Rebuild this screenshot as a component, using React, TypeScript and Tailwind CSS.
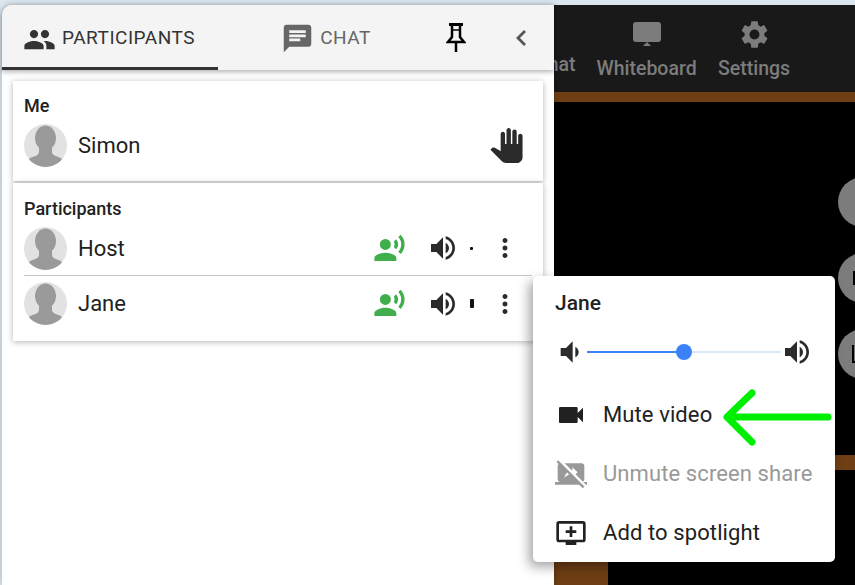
const ICONS = {
  people:
    "M16 11c1.66 0 2.99-1.34 2.99-3S17.66 5 16 5c-1.66 0-3 1.34-3 3s1.34 3 3 3zm-8 0c1.66 0 2.99-1.34 2.99-3S9.66 5 8 5C6.34 5 5 6.34 5 8s1.34 3 3 3zm0 2c-2.33 0-7 1.17-7 3.5V19h14v-2.5c0-2.33-4.67-3.5-7-3.5zm8 0c-.29 0-.62.02-.97.05 1.16.84 1.97 1.97 1.97 3.45V19h6v-2.5c0-2.33-4.67-3.5-7-3.5z",
  chat: "M20 2H4c-1.1 0-1.99.9-1.99 2L2 22l4-4h14c1.1 0 2-.9 2-2V4c0-1.1-.9-2-2-2zM6 9h12v2H6V9zm8 5H6v-2h8v2zm4-6H6V6h12v2z",
  hand: "M23 5.5V20c0 2.2-1.8 4-4 4h-7.3c-1.08 0-2.1-.43-2.85-1.19L1 14.83s1.26-1.23 1.3-1.25c.22-.19.49-.29.79-.29.22 0 .42.06.6.16.04.01 4.31 2.46 4.31 2.46V4c0-.83.67-1.5 1.5-1.5S11 3.17 11 4v7h1V1.5c0-.83.67-1.5 1.5-1.5S15 .67 15 1.5V11h1V2.5c0-.83.67-1.5 1.5-1.5s1.5.67 1.5 1.5V11h1V5.5c0-.83.67-1.5 1.5-1.5s1.5.67 1.5 1.5z",
  voice:
    "M9 5a4 4 0 1 0 0 8 4 4 0 0 0 0-8zM9 15c-2.67 0-8 1.34-8 4v2h16v-2c0-2.66-5.33-4-8-4zm7.76-9.64l-1.68 1.69c.84 1.18.84 2.71 0 3.89l1.68 1.69c2.02-2.02 2.02-5.07 0-7.27zM20.07 2l-1.63 1.63c2.77 3.02 2.77 7.56 0 10.74L20.07 16c3.9-3.89 3.91-9.95 0-14z",
  volumeUp:
    "M3 9v6h4l5 5V4L7 9H3zm13.5 3c0-1.77-1.02-3.29-2.5-4.03v8.05c1.48-.73 2.5-2.25 2.5-4.02zM14 3.23v2.06c2.89.86 5 3.54 5 6.71s-2.11 5.85-5 6.71v2.06c4.01-.91 7-4.49 7-8.77s-2.99-7.86-7-8.77z",
  volumeDown:
    "M18.5 12c0-1.77-1.02-3.29-2.5-4.03v8.05c1.48-.73 2.5-2.25 2.5-4.02zM5 9v6h4l5 5V4L9 9H5z",
  more: "M12 8c1.1 0 2-.9 2-2s-.9-2-2-2-2 .9-2 2 .9 2 2 2zm0 2c-1.1 0-2 .9-2 2s.9 2 2 2 2-.9 2-2-.9-2-2-2zm0 6c-1.1 0-2 .9-2 2s.9 2 2 2 2-.9 2-2-.9-2-2-2z",
  video:
    "M17 10.5V7c0-.55-.45-1-1-1H4c-.55 0-1 .45-1 1v10c0 .55.45 1 1 1h12c.55 0 1-.45 1-1v-3.5l4 4v-11l-4 4z",
  stopShare:
    "M21.22 18.02l2 2H24v-2h-2.78zm.77-2l.01-10c0-1.11-.9-2-2-2H7.22l5.23 5.23c.18-.04.36-.07.55-.1V7.02l4 3.73-1.58 1.47 5.54 5.54c.61-.33 1.03-.99 1.03-1.74zM2.39 1.73L1.11 3l1.54 1.54c-.4.36-.65.89-.65 1.48v10c0 1.1.89 2 2 2H0v2h18.13l2.71 2.71 1.27-1.27L2.39 1.73zM7 15.02c.31-1.48.92-2.95 2.07-4.06l1.59 1.59c-1.54.38-2.7 1.18-3.66 2.47z",
  addQueue:
    "M21 3H3c-1.11 0-2 .89-2 2v12c0 1.1.89 2 2 2h5v2h8v-2h5c1.1 0 1.99-.9 1.99-2L23 5c0-1.11-.9-2-2-2zm0 14H3V5h18v12zM16 10v2h-3v3h-2v-3H8v-2h3V7h2v3h3z",
  settings:
    "M19.14 12.94c.04-.3.06-.61.06-.94 0-.32-.02-.64-.07-.94l2.03-1.58c.18-.14.23-.41.12-.61l-1.92-3.32c-.12-.22-.37-.29-.59-.22l-2.39.96c-.5-.38-1.03-.7-1.62-.94l-.36-2.54c-.04-.24-.24-.41-.48-.41h-3.84c-.24 0-.43.17-.47.41l-.36 2.54c-.59.24-1.13.57-1.62.94l-2.39-.96c-.22-.08-.47 0-.59.22L2.74 8.87c-.12.21-.08.47.12.61l2.03 1.58c-.05.3-.09.63-.09.94s.02.64.07.94l-2.03 1.58c-.18.14-.23.41-.12.61l1.92 3.32c.12.22.37.29.59.22l2.39-.96c.5.38 1.03.7 1.62.94l.36 2.54c.05.24.24.41.48.41h3.84c.24 0 .44-.17.47-.41l.36-2.54c.59-.24 1.13-.56 1.62-.94l2.39.96c.22.08.47 0 .59-.22l1.92-3.32c.12-.22.07-.47-.12-.61l-2.01-1.58zM12 15.6c-1.98 0-3.6-1.62-3.6-3.6s1.62-3.6 3.6-3.6 3.6 1.62 3.6 3.6-1.62 3.6-3.6 3.6z",
};

function Icon({ d, className }: { d: string; className: string }) {
  return (
    <svg viewBox="0 0 24 24" fill="currentColor" className={className}>
      <path fillRule="evenodd" d={d} />
    </svg>
  );
}

function Avatar() {
  return (
    <svg viewBox="0 0 43 43" className="h-[43px] w-[43px] shrink-0">
      <defs>
        <clipPath id="avatar-clip">
          <circle cx="21.5" cy="21.5" r="21.5" />
        </clipPath>
      </defs>
      <circle cx="21.5" cy="21.5" r="21.5" fill="#e2e2e2" />
      <g clipPath="url(#avatar-clip)" fill="#9a9a9a">
        <ellipse cx="21.5" cy="14" rx="10.5" ry="12.5" />
        <path d="M15 22h13v6c0 2 2 3.5 5 4.5 4 1.4 7 3 8 6.5v6H2v-6c1-3.500 4-5.100 8-6.500 3-1 5-2.500 5-4.500z" />
      </g>
    </svg>
  );
}

function ParticipantRow({
  name,
  level,
  divider,
}: {
  name: string;
  level: string;
  divider?: boolean;
}) {
  return (
    <div
      className={`flex h-[55px] items-center ${divider ? "border-b border-[#c9c9c9]" : ""}`}
    >
      <Avatar />
      <span className="ml-[11px] flex-1 text-[22px] text-[#212121]">{name}</span>
      <Icon d={ICONS.voice} className="h-[33px] w-[33px] text-[#41ae4c]" />
      <Icon d={ICONS.volumeUp} className="ml-[21px] h-[32px] w-[32px] text-[#2b2b2b]" />
      <span className="flex w-[31px] justify-center pr-[6px]">
        <span className={`rounded-[1px] bg-[#111] ${level}`} />
      </span>
      <Icon d={ICONS.more} className="h-[30px] w-[30px] text-[#2b2b2b]" />
      <span className="w-[12px]" />
    </div>
  );
}

function MenuRow({ d, label, muted }: { d: string; label: string; muted?: boolean }) {
  return (
    <div
      className={`flex h-[59px] items-center text-[22px] tracking-[0.1px] ${muted ? "text-[#999]" : "text-[#212121]"}`}
    >
      <Icon d={d} className="mr-[16px] h-[32px] w-[32px]" />
      {label}
    </div>
  );
}

function SidePanel() {
  return (
    <div className="relative z-10 flex w-[552px] shrink-0 flex-col rounded-tl-[10px] bg-white shadow-[0_0_6px_rgba(0,0,0,0.25)]">
      <div className="flex h-[65px] items-stretch rounded-tl-[10px] bg-[#f4f4f4] shadow-[0_2px_5px_rgba(0,0,0,0.3)]">
        <div className="flex w-[216px] items-center justify-start border-b-[3px] border-[#333] pl-[21px] pt-[6px] text-[#333]">
          <Icon d={ICONS.people} className="h-[33px] w-[33px]" />
          <span className="ml-[6px] mt-[-2px] text-[19px] tracking-[0.5px]">PARTICIPANTS</span>
        </div>
        <div className="flex w-[216px] items-center justify-center pt-[1px] text-[#666]">
          <Icon d={ICONS.chat} className="h-[33px] w-[33px]" />
          <span className="ml-[6px] text-[19px] tracking-[0.5px]">CHAT</span>
        </div>
        <div className="flex w-[44px] items-center justify-center">
          <svg viewBox="0 0 20 30" className="h-[30px] w-[20px]" fill="none" stroke="#000" strokeWidth="2.500">
            <path d="M3 1.500h14" strokeWidth="3" />
            <path d="M6 2v12l-4 5h16l-4-5V2" />
            <path d="M10 19v10" />
            <path d="M7 7h6" strokeWidth="1.500" />
          </svg>
        </div>
        <div className="flex w-[76px] items-center justify-center pl-[10px]">
          <svg viewBox="0 0 12 18" className="h-[18px] w-[12px]" fill="none" stroke="#555" strokeWidth="2.800">
            <path d="M10 2 3 9l7 7" />
          </svg>
        </div>
      </div>

      <div className="mx-[11px] mt-[11px] flex h-[100px] flex-col bg-white pl-[11px] pt-[15px] shadow-[0_1px_6px_rgba(0,0,0,0.3)]">
        <div className="h-[20px] text-[18px] font-medium leading-[20px] text-[#212121]">Me</div>
        <div className="mt-[3px] flex h-[52px] items-center">
          <Avatar />
          <span className="ml-[11px] flex-1 text-[22px] text-[#212121]">Simon</span>
          <Icon d={ICONS.hand} className="mr-[19px] h-[35px] w-[35px] text-[#2b2b2b]" />
        </div>
      </div>

      <div className="mx-[11px] mt-[2px] flex h-[158px] flex-col bg-white px-[11px] pt-[16px] shadow-[0_1px_6px_rgba(0,0,0,0.3)]">
        <div className="mb-[2px] h-[20px] text-[18px] font-medium leading-[20px] text-[#212121]">
          Participants
        </div>
        <ParticipantRow name="Host" level="h-[3px] w-[3px]" divider />
        <ParticipantRow name="Jane" level="h-[9px] w-[4px]" />
      </div>
    </div>
  );
}

function VideoArea() {
  return (
    <div className="relative flex min-w-0 flex-1 flex-col overflow-hidden bg-black">
      <div className="flex h-[87px] shrink-0 items-start bg-[#191919] pl-[1px] font-medium text-[#7c7c7c]">
        <span className="-ml-[20px] mt-[49px] text-[19.500px] leading-[22px]">Chat</span>
        <div className="ml-[21px] flex w-[100px] flex-col items-center pt-[16px]">
          <svg viewBox="0 0 30 26" className="h-[26px] w-[30px]" fill="currentColor">
            <rect x="1" y="1" width="28" height="20" rx="3" />
            <path d="M11 25l4-4 4 4z" />
          </svg>
          <span className="mt-[11px] text-[19.500px] leading-[22px]">Whiteboard</span>
        </div>
        <div className="ml-[21px] flex w-[73px] flex-col items-center pt-[13px]">
          <Icon d={ICONS.settings} className="h-[33px] w-[33px]" />
          <span className="mt-[7px] text-[19.500px] leading-[22px]">Settings</span>
        </div>
      </div>
      <div className="h-[10px] shrink-0 bg-[#6e3e14]" />
      <div className="h-[353px] shrink-0" />
      <div className="h-[15px] shrink-0 bg-[#6e3e14]" />
      <div className="flex flex-1">
        <div className="w-[54px] bg-[#6e3e14]" />
      </div>

      <div className="absolute left-[284px] top-[172px] flex w-[60px] flex-col gap-[26px]">
        <div className="h-[50px] w-[50px] rounded-full bg-[#7c7c7c]" />
        <div className="flex h-[50px] w-[50px] items-center rounded-full bg-[#7c7c7c] pl-[15px]">
          <span className="h-[14px] w-[10px] bg-black" />
        </div>
        <div className="flex h-[50px] w-[50px] items-center rounded-full bg-[#7c7c7c] pl-[14px]">
          <span className="h-[18px] w-[10px] border-b-2 border-l-2 border-black" />
        </div>
      </div>
    </div>
  );
}

function ParticipantMenu() {
  return (
    <div className="absolute left-[533px] top-[276px] z-20 flex h-[286px] w-[302px] flex-col rounded-[5px] bg-white pl-[22px] shadow-[-4px_5px_12px_rgba(0,0,0,0.35)]">
      <div className="mt-[15px] h-[24px] text-[21px] font-medium leading-[24px] text-[#212121]">
        Jane
      </div>
      <div className="mt-[22px] flex h-[30px] items-center">
        <Icon d={ICONS.volumeDown} className="-ml-[1px] h-[32px] w-[32px] text-[#2b2b2b]" />
        <div className="relative ml-[1px] flex h-[2px] w-[194px]">
          <div className="w-[97px] bg-[#3b82f6]" />
          <div className="flex-1 bg-[#dbe7fb]" />
          <div className="absolute left-[89px] top-[-7px] h-[16px] w-[16px] rounded-full bg-[#3b82f6]" />
        </div>
        <Icon d={ICONS.volumeUp} className="h-[32px] w-[32px] text-[#2b2b2b]" />
      </div>
      <div className="mt-[18px] flex flex-col">
        <MenuRow d={ICONS.video} label="Mute video" />
        <MenuRow d={ICONS.stopShare} label="Unmute screen share" muted />
        <MenuRow d={ICONS.addQueue} label="Add to spotlight" />
      </div>
    </div>
  );
}

export default function App() {
  return (
    <div
      className="relative flex h-[585px] w-[855px] overflow-hidden bg-[#dbe6ef] pl-[2px] pt-[5px]"
      style={{ fontFamily: "Roboto, sans-serif" }}
    >
      <SidePanel />
      <VideoArea />
      <ParticipantMenu />
      <svg viewBox="0 0 855 585" className="pointer-events-none absolute left-0 top-0 z-30 h-[585px] w-[855px]" fill="none" stroke="#00ee00" strokeWidth="7" strokeLinecap="round" strokeLinejoin="round">
        <path d="M828 417H729M752 393l-25 24 25 25" />
      </svg>
    </div>
  );
}
